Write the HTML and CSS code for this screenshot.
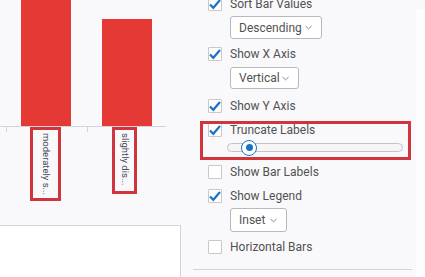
FILE: index.html
```html
<!DOCTYPE html>
<html>
<head>
<meta charset="utf-8">
<link rel="stylesheet" href="styles.css">
</head>
<body>
<div class="page">
  <div class="chart">
    <div class="bars">
      <div class="bar bar-1"></div>
      <div class="bar bar-2"></div>
    </div>
    <div class="axis"></div>
    <div class="labels">
      <div class="tick tick-1"></div>
      <div class="label-box box-1"><span class="label">moderately s...</span></div>
      <div class="tick tick-2"></div>
      <div class="label-box box-2"><span class="label">slightly dis...</span></div>
    </div>
    <div class="card"></div>
  </div>
  <div class="panel">
    <div class="row row-first"><span class="cb on"><svg viewBox="0 0 14 14"><polyline points="2,7.5 5.3,10.8 12,3"/></svg></span><span class="txt">Sort Bar Values</span></div>
    <div class="dd dd-desc"><span>Descending</span><svg class="chev" viewBox="0 0 8 5"><polyline points="0.5,0.8 4,4 7.5,0.8"/></svg></div>
    <div class="row gap-9"><span class="cb on"><svg viewBox="0 0 14 14"><polyline points="2,7.5 5.3,10.8 12,3"/></svg></span><span class="txt">Show X Axis</span></div>
    <div class="dd dd-vert"><span>Vertical</span><svg class="chev" viewBox="0 0 8 5"><polyline points="0.5,0.8 4,4 7.5,0.8"/></svg></div>
    <div class="row gap-10"><span class="cb on"><svg viewBox="0 0 14 14"><polyline points="2,7.5 5.3,10.8 12,3"/></svg></span><span class="txt">Show Y Axis</span></div>
    <div class="group gap-10">
      <div class="row"><span class="cb on"><svg viewBox="0 0 14 14"><polyline points="2,7.5 5.3,10.8 12,3"/></svg></span><span class="txt">Truncate Labels</span></div>
      <div class="slider"><div class="thumb"><div class="dot"></div></div></div>
    </div>
    <div class="row gap-13"><span class="cb"></span><span class="txt">Show Bar Labels</span></div>
    <div class="row gap-10"><span class="cb on"><svg viewBox="0 0 14 14"><polyline points="2,7.5 5.3,10.8 12,3"/></svg></span><span class="txt">Show Legend</span></div>
    <div class="dd dd-inset"><span>Inset</span><svg class="chev" viewBox="0 0 8 5"><polyline points="0.5,0.8 4,4 7.5,0.8"/></svg></div>
    <div class="row gap-8"><span class="cb"></span><span class="txt">Horizontal Bars</span></div>
    <div class="sep"></div>
  </div>
  <div class="strip"></div>
</div>
</body>
</html>
```

FILE: styles.css
```css
html, body {
  margin: 0;
  padding: 0;
  background: #f9f9fb;
  overflow: hidden;
  height: 277px;
}
.page {
  display: flex;
  align-items: flex-start;
  width: 425px;
  height: 277px;
  font-family: Roboto, "Liberation Sans", sans-serif;
  color: #525252;
}
.chart {
  width: 181px;
  flex: none;
  display: flex;
  flex-direction: column;
}
.bars {
  display: flex;
  align-items: flex-end;
  height: 126px;
}
.bar {
  width: 50px;
  background: #e53935;
}
.bar-1 { margin-left: 21px; height: 126px; }
.bar-2 { margin-left: 31px; height: 107px; }
.axis {
  width: 166px;
  height: 1px;
  background: #d4d4d8;
}
.labels {
  display: flex;
  align-items: flex-start;
  height: 74px;
}
.tick {
  width: 1px;
  height: 5px;
  background: #d4d4d8;
}
.tick-1 { margin-left: 6px; }
.tick-2 { margin-left: 26px; }
.label-box {
  box-sizing: border-box;
  border: 3px solid #d0343d;
  display: flex;
  justify-content: center;
  padding-top: 3px;
}
.box-1 { margin-left: 23px; width: 31px; height: 74px; }
.box-2 { margin-left: 24px; width: 25px; height: 67px; }
.label {
  writing-mode: vertical-rl;
  font-size: 9.5px;
  line-height: 10px;
  color: #4a4d57;
  white-space: nowrap;
}
.card {
  margin-top: 24px;
  height: 60px;
  background: #ffffff;
  border-top: 1px solid #d4d4d8;
  border-right: 1px solid #d4d4d8;
  box-sizing: border-box;
}
.panel {
  width: 219px;
  margin-left: 12px;
  padding-left: 15px;
  box-sizing: border-box;
  flex: none;
  display: flex;
  flex-direction: column;
  align-items: flex-start;
}
.row {
  display: flex;
  align-items: center;
  height: 14px;
  gap: 8px;
  font-size: 12px;
  white-space: nowrap;
}
.row-first { margin-top: -3px; }
.gap-8 { margin-top: 8px; }
.gap-9 { margin-top: 8px; }
.gap-10 { margin-top: 10px; }
.gap-13 { margin-top: 13px; }
.cb {
  width: 14px;
  height: 14px;
  box-sizing: border-box;
  background: #ffffff;
  border: 1px solid #c9c9cc;
  border-radius: 1px;
  flex: none;
  position: relative;
}
.cb svg {
  position: absolute;
  left: -1px;
  top: -1px;
  width: 14px;
  height: 14px;
}
.cb svg polyline {
  fill: none;
  stroke: #1a73c7;
  stroke-width: 2.2;
}
.dd {
  margin-top: 5px;
  margin-left: 22px;
  box-sizing: border-box;
  display: flex;
  align-items: center;
  justify-content: space-between;
  padding: 0 9px 0 8px;
  background: #ffffff;
  border: 1px solid #b9b9bd;
  border-radius: 3px;
  font-size: 12px;
  color: #525252;
}
.dd-desc { width: 92px; height: 23px; }
.dd-vert { width: 69px; height: 22px; margin-top: 6px; }
.dd-inset { width: 57px; height: 24px; margin-top: 5px; }
.chev {
  width: 7px;
  height: 5px;
}
.chev polyline {
  fill: none;
  stroke: #777;
  stroke-width: 1;
}
.group {
  position: relative;
  align-self: stretch;
}
.group::after {
  content: "";
  position: absolute;
  left: -8px;
  right: 1px;
  top: -2px;
  bottom: -8px;
  border: 3px solid #d0343d;
  pointer-events: none;
}
.slider {
  margin-top: 6px;
  margin-left: 19px;
  width: 176px;
  height: 9px;
  box-sizing: border-box;
  border: 1px solid #c4c4c8;
  background: #f6f6f7;
  border-radius: 5px;
  display: flex;
  align-items: center;
}
.thumb {
  margin-left: 13px;
  width: 16px;
  height: 16px;
  box-sizing: border-box;
  border: 1.5px solid #1a73c7;
  border-radius: 50%;
  background: #ffffff;
  display: flex;
  align-items: center;
  justify-content: center;
  flex: none;
}
.dot {
  width: 7px;
  height: 7px;
  border-radius: 50%;
  background: #1a73c7;
}
.sep {
  margin-top: 15px;
  margin-left: -15px;
  width: 219px;
  height: 1px;
  background: #d4d4d8;
}
.strip {
  margin-left: 4px;
  margin-top: 9px;
  width: 9px;
  height: 268px;
  background: #fdfdfe;
}
```
